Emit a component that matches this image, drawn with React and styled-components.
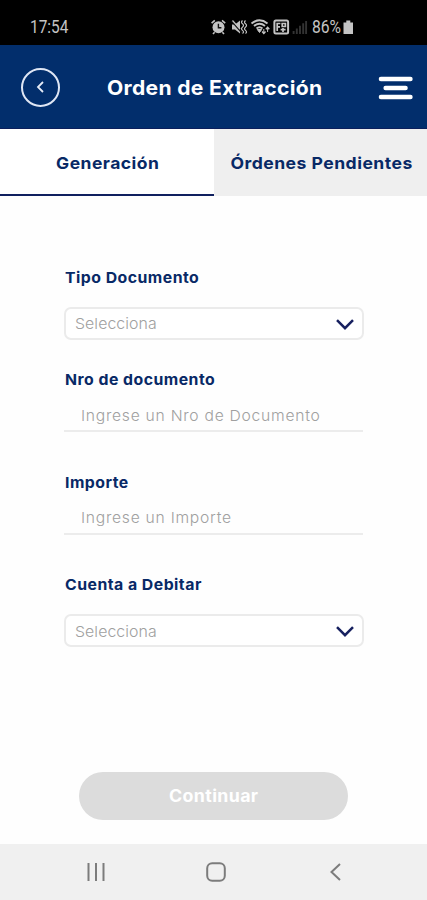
import React from "react";
import styled, { createGlobalStyle } from "styled-components";

const Global = createGlobalStyle`
  * { box-sizing: border-box; }
  body { margin: 0; background: #fff; }
  button { font: inherit; border: 0; padding: 0; background: none; }
`;

const Screen = styled.main`
  display: flex;
  flex-direction: column;
  width: 427px;
  height: 900px;
  overflow: hidden;
  background: #fefefe;
  font-family: Inter, sans-serif;
  color: #082966;
`;

const Stretch = styled.span`
  display: inline-block;
  white-space: nowrap;
  transform: scaleX(${(p) => p.$x});
  transform-origin: ${(p) => p.$origin || "left"} center;
`;

const StatusBar = styled.div`
  flex: 0 0 45px;
  display: flex;
  align-items: flex-start;
  padding: 17px 73px 0 30px;
  background: #000;
  color: #c4c4c4;
  font: 400 18px/20px Roboto, sans-serif;
`;

const Time = styled.div`
  flex: 1;
`;

const StatusIcons = styled.svg`
  width: 98px;
  height: 20px;
  margin-right: 3px;
`;

const Percent = styled.div`
  width: 31px;
`;

const Battery = styled.svg`
  width: 11px;
  height: 20px;
`;

const Header = styled.header`
  flex: 0 0 84px;
  display: flex;
  align-items: center;
  padding: 1px 14px 0 21px;
  background: #022e6c;
  border-bottom: 1px solid #0b1f5c;
  color: #fff;
`;

const BackButton = styled.button`
  display: grid;
  place-items: center;
  width: 39px;
  height: 39px;
  border: 2px solid #dfe6f4 !important;
  border-radius: 50%;
`;

const Title = styled.h1`
  flex: 1;
  margin: 1px 0 0 47px;
  font-size: 20px;
  line-height: 24px;
  font-weight: 700;
  letter-spacing: 0.3px;
`;

const MenuButton = styled.button`
  display: flex;
  width: 35px;
  height: 24px;
  margin-top: 2px;
`;

const Tabs = styled.nav`
  flex: 0 0 67px;
  display: grid;
  grid-template-columns: 214px 1fr;
`;

const Tab = styled.button`
  display: flex;
  align-items: center;
  justify-content: center;
  padding: 2px 0 0 2px;
  background: ${(p) => (p.$active ? "#fff" : "#efefef")};
  border-bottom: 2px solid ${(p) => (p.$active ? "#10205f" : "#efefef")};
  color: #082966;
  font-size: 16.5px;
  font-weight: 650;
  letter-spacing: 0.45px;
`;

const Form = styled.form`
  flex: 1;
  display: flex;
  flex-direction: column;
  padding: 69.5px 63px 0 64px;
`;

const Field = styled.div`
  height: 102.6px;
  flex: none;
`;

const Label = styled.label`
  display: block;
  height: 24px;
  padding-left: 1px;
  font-size: 15px;
  line-height: 24px;
  font-weight: 700;
  letter-spacing: 0.45px;
`;

const SelectBox = styled.div`
  display: flex;
  align-items: center;
  justify-content: space-between;
  height: 33px;
  margin-top: 17px;
  padding: 2px 8px 0 9px;
  border: 2px solid #ebebeb;
  border-radius: 7px;
  background: #fff;
`;

const Placeholder = styled.span`
  color: #a0a0a0;
  font-size: 15px;
  line-height: 20px;
  font-weight: 300;
  letter-spacing: ${(p) => p.$spacing || "0.3px"};
`;

const LineInput = styled.div`
  display: flex;
  align-items: center;
  height: 31px;
  margin: 9px 1px 0 0;
  padding-left: 17px;
  border-bottom: 2px solid #ececec;
`;

const Submit = styled.button`
  flex: none;
  width: 269px;
  height: 48px;
  margin: 96px 0 0 15px;
  padding: 1px 0 0 1px;
  border-radius: 24px;
  background: #dcdcdc;
  color: #fff;
  font-size: 17px;
  font-weight: 700;
  letter-spacing: 0.35px;
`;

const SystemNav = styled.footer`
  flex: 0 0 56px;
  display: flex;
  align-items: center;
  justify-content: space-between;
  padding: 0 81px 0 86px;
  background: #f0f0f0;
`;

const NavIcon = styled.svg`
  width: 20px;
  height: 22px;
  fill: none;
  stroke: #7c7c7c;
  stroke-width: 2;
`;

const Chevron = () => (
  <svg width="18" height="11" viewBox="0 0 18 11" fill="none" stroke="#17205f" strokeWidth="2.5">
    <path d="M1 1.2 9 9.2 17 1.2" />
  </svg>
);

const SelectField = ({ label }) => (
  <Field>
    <Label><Stretch $x={1.055}>{label}</Stretch></Label>
    <SelectBox>
      <Placeholder $spacing="0.05px"><Stretch $x={1.06}>Selecciona</Stretch></Placeholder>
      <Chevron />
    </SelectBox>
  </Field>
);

const TextField = ({ label, hint }) => (
  <Field>
    <Label><Stretch $x={1.055}>{label}</Stretch></Label>
    <LineInput>
      <Placeholder $spacing="0.7px"><Stretch $x={1.044}>{hint}</Stretch></Placeholder>
    </LineInput>
  </Field>
);

const Indicators = () => (
  <StatusIcons viewBox="0 0 98 20" fill="none" stroke="#c4c4c4">
    <path d="M.6 6.2 3.8 3.4M14.2 6.2 11 3.4M3.6 15.2 2 17M11.4 15.2 13 17" strokeWidth="1.6" />
    <circle cx="7.5" cy="10.3" r="6" fill="#c4c4c4" stroke="none" />
    <path d="M7.4 6.8v4h3" stroke="#111" strokeWidth="1.4" />
    <path d="M21 7.5h3L29 3.5v13l-5-4h-3z" fill="#c4c4c4" stroke="none" />
    <path d="M20.5 4 31 16" stroke="#111" strokeWidth="1.3" />
    <path d="M21.5 3.5 29 12M31.5 3.5q-2 1.7 0 3.3t0 3.3 0 3.3 0 3M34.5 3.5q-2 1.7 0 3.3t0 3.3 0 3.3 0 3" strokeWidth="1.2" />
    <path d="M40.5 6.5q8-6.5 16 0M43 9q5.5-4.5 11 0M45.5 11.5q3-2.5 6 0" strokeWidth="1.9" />
    <path d="M46.3 12.5h4.4l-2.2 3zM52.8 12v4.5M56.6 10V15" fill="#c4c4c4" strokeWidth="1" />
    <path d="m51.1 14.5 1.7 2 1.7-2M54.9 12.3l1.7-2 1.7 2" strokeWidth="1.4" />
    <rect x="63.4" y="3.4" width="13.7" height="13.2" rx="1.5" strokeWidth="2" />
    <path d="M66.2 14V6.5h3.2M66.2 9.8h2.8M71.2 6.5h3.2v3h-3.2zM69.6 12.7h5M72 11v4" strokeWidth="1.7" />
    <path d="M82.6 14v3M85.8 11.5V17M89 8.7V17M92.2 6.3V17M95.1 4V17" stroke="#333" strokeWidth="1.9" />
  </StatusIcons>
);

export default function App() {
  return (
    <>
      <Global />
      <Screen>
        <StatusBar>
          <Time><Stretch $x={0.855}>17:54</Stretch></Time>
          <Indicators />
          <Percent><Stretch $x={0.87}>86%</Stretch></Percent>
          <Battery viewBox="0 0 11 20" fill="#c4c4c4">
            <path d="M3.3 3.5h4v2H10V17H.5V5.5h2.8z" />
          </Battery>
        </StatusBar>
        <Header>
          <BackButton type="button" aria-label="Volver">
            <svg width="10" height="14" viewBox="0 0 10 14" fill="none" stroke="#e6ecf7" strokeWidth="1.8">
              <path d="M7 2 2 7l5 5" />
            </svg>
          </BackButton>
          <Title><Stretch $x={1.055}>Orden de Extracción</Stretch></Title>
          <MenuButton type="button" aria-label="Menú">
            <svg width="35" height="24" viewBox="0 0 35 24" stroke="#fff" strokeWidth="4.4" strokeLinecap="round">
              <path d="M2.9 3h29.6M7.6 12h20M2.9 21h29.6" />
            </svg>
          </MenuButton>
        </Header>
        <Tabs>
          <Tab type="button" $active><Stretch $x={1.06} $origin="center">Generación</Stretch></Tab>
          <Tab type="button"><Stretch $x={1.065} $origin="center">Órdenes Pendientes</Stretch></Tab>
        </Tabs>
        <Form>
          <SelectField label="Tipo Documento" />
          <TextField label="Nro de documento" hint="Ingrese un Nro de Documento" />
          <TextField label="Importe" hint="Ingrese un Importe" />
          <SelectField label="Cuenta a Debitar" />
          <Submit type="button"><Stretch $x={1.045} $origin="center">Continuar</Stretch></Submit>
        </Form>
        <SystemNav>
          <NavIcon viewBox="0 0 20 22"><path d="M2.5 2v18M10 2v18M17.5 2v18" /></NavIcon>
          <NavIcon viewBox="0 0 20 22"><rect x="1.2" y="2.2" width="17.6" height="17.6" rx="5" /></NavIcon>
          <NavIcon viewBox="0 0 20 22"><path d="M14 3 5.5 11l8.5 8" /></NavIcon>
        </SystemNav>
      </Screen>
    </>
  );
}
